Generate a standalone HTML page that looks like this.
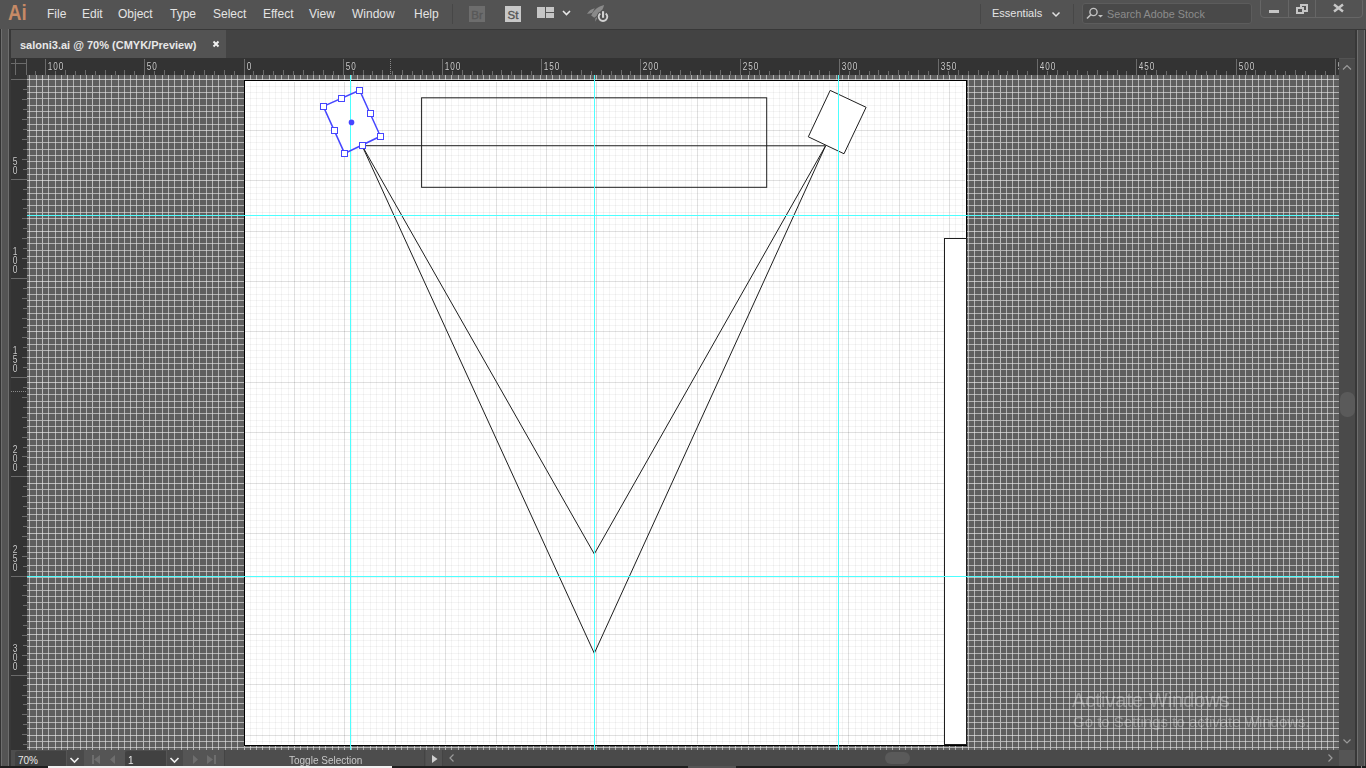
<!DOCTYPE html>
<html><head><meta charset="utf-8">
<style>
*{margin:0;padding:0;box-sizing:border-box}
html,body{width:1366px;height:768px;overflow:hidden;background:#535353;font-family:"Liberation Sans",sans-serif}
.a{position:absolute}
.m{position:absolute;top:6px;font-size:12px;color:#e4e4e4;line-height:16px;white-space:nowrap}
svg text.rl{font-family:"Liberation Sans",sans-serif;font-size:10px;fill:#cccccc;letter-spacing:1.2px;stroke:#262626;stroke-width:0.7px;paint-order:stroke;stroke-linejoin:round}
</style></head><body>
<!-- menu bar -->
<div class="a" style="left:0;top:0;width:1366px;height:29px;background:#535353"></div>
<div class="a" style="left:0;top:29px;width:1366px;height:1px;background:#383838"></div>
<div class="a" style="left:8px;top:0px;font-size:22px;font-weight:bold;color:#c68a66;line-height:26px;transform:scaleX(0.85);transform-origin:0 0">Ai</div>
<div class="m" style="left:47px">File</div>
<div class="m" style="left:82px">Edit</div>
<div class="m" style="left:118px">Object</div>
<div class="m" style="left:170px">Type</div>
<div class="m" style="left:213px">Select</div>
<div class="m" style="left:263px">Effect</div>
<div class="m" style="left:309px">View</div>
<div class="m" style="left:352px">Window</div>
<div class="m" style="left:414px">Help</div>
<div class="a" style="left:452px;top:4px;width:1px;height:20px;background:#474747"></div>
<div class="a" style="left:469px;top:6px;width:16px;height:16px;background:#6d6d6d;color:#585858;font-size:11.5px;line-height:18px;text-align:center;-webkit-text-stroke:0.35px #585858">Br</div>
<div class="a" style="left:505px;top:6px;width:16px;height:16px;background:#c8c8c8;color:#555;font-size:11.5px;line-height:18px;text-align:center;-webkit-text-stroke:0.35px #555">St</div>
<div class="a" style="left:537px;top:7px;width:8px;height:11px;background:#c6c6c6"></div>
<div class="a" style="left:546px;top:7px;width:8px;height:5px;background:#c6c6c6"></div>
<div class="a" style="left:546px;top:13px;width:8px;height:5px;background:#c6c6c6"></div>
<svg class="a" style="left:0;top:0" width="1366" height="30">
 <path d="M563 11l3.5 3.5l3.5-3.5" fill="none" stroke="#e8e8e8" stroke-width="1.6"/>
 <path d="M1052.5 12.5l3.5 3.5l3.5-3.5" fill="none" stroke="#e0e0e0" stroke-width="1.5"/>
 <path d="M587 13.7C589 10.6 591.6 8.8 594.8 8.2L592.3 12.8C590.6 13.5 588.8 13.8 587 13.7Z" fill="#8a8a8a"/>
 <path d="M591.2 15.6C593.5 10.2 598 6.6 604 5.1C603.2 9.6 600.2 14 594.2 17.7Z" fill="#8a8a8a"/>
 <path d="M595 21.8L595.6 17.9L598.3 16.4Z" fill="#8a8a8a"/>
 <circle cx="603" cy="17" r="6.2" fill="#535353"/>
 <path d="M600.3 13.4A4.3 4.3 0 1 0 605.7 13.4" fill="none" stroke="#d2d2d2" stroke-width="1.9"/>
 <rect x="601.3" y="10.2" width="3.4" height="8.6" fill="#535353"/>
 <rect x="602" y="11.2" width="2.1" height="6.6" fill="#d2d2d2"/>
</svg>
<div class="a" style="left:980px;top:4px;width:1px;height:20px;background:#474747"></div>
<div class="m" style="left:992px;top:5px;font-size:11px">Essentials</div>
<div class="a" style="left:1073px;top:4px;width:1px;height:20px;background:#474747"></div>
<div class="a" style="left:1082px;top:3px;width:170px;height:21px;background:#494949;border:1px solid #5c5c5c;border-radius:3px"></div>
<svg class="a" style="left:1083px;top:3px" width="30" height="21">
 <circle cx="10.5" cy="9" r="3.6" fill="none" stroke="#c2c2c2" stroke-width="1.4"/>
 <path d="M8 11.5L4 15.5" stroke="#c2c2c2" stroke-width="1.6"/>
 <path d="M15 12h5l-2.5 2.5z" fill="#c2c2c2"/>
</svg>
<div class="m" style="left:1107px;top:6px;font-size:10.8px;color:#8c8c8c">Search Adobe Stock</div>
<div class="a" style="left:1260px;top:-3px;width:103px;height:21px;border:1px solid #666;border-radius:4px"></div>
<div class="a" style="left:1288px;top:0;width:1px;height:17px;background:#666"></div>
<div class="a" style="left:1315px;top:0;width:1px;height:17px;background:#666"></div>
<div class="a" style="left:1269px;top:10px;width:10px;height:3px;background:#c6c6c6"></div>
<svg class="a" style="left:1290px;top:0" width="25" height="17">
 <rect x="11" y="5" width="6" height="6" fill="none" stroke="#c6c6c6" stroke-width="2"/>
 <rect x="6" y="7" width="8" height="7" fill="#535353"/>
 <rect x="7" y="8" width="6" height="5" fill="none" stroke="#c6c6c6" stroke-width="2"/>
</svg>
<svg class="a" style="left:1318px;top:0" width="40" height="17">
 <path d="M16 4.5l9 7M25 4.5l-9 7" stroke="#c6c6c6" stroke-width="2.4"/>
</svg>
<!-- tab bar -->
<div class="a" style="left:0;top:30px;width:1366px;height:28px;background:#434343"></div>
<div class="a" style="left:11px;top:30px;width:215px;height:28px;background:#535353"></div>
<div class="a" style="left:20px;top:38px;font-size:11px;font-weight:bold;color:#e8e8e8;line-height:14px;white-space:nowrap">saloni3.ai @ 70% (CMYK/Preview)</div>
<svg class="a" style="left:210px;top:38px" width="14" height="12">
 <path d="M3.5 3.5l5 5M8.5 3.5l-5 5" stroke="#f2f2f2" stroke-width="1.9"/>
</svg>
<!-- left strip -->
<div class="a" style="left:0;top:29px;width:11px;height:737px;background:#545454"></div>
<div class="a" style="left:0;top:29px;width:1px;height:737px;background:#333"></div>
<div class="a" style="left:1px;top:29px;width:1px;height:737px;background:#6e6e6e"></div>
<div class="a" style="left:8px;top:29px;width:1px;height:737px;background:#6e6e6e"></div>
<div class="a" style="left:9px;top:29px;width:2px;height:737px;background:#383838"></div>
<!-- right strip -->
<div class="a" style="left:1355px;top:30px;width:11px;height:736px;background:#505050"></div>
<div class="a" style="left:1355px;top:30px;width:2px;height:736px;background:#383838"></div>
<div class="a" style="left:1357px;top:30px;width:1px;height:736px;background:#6e6e6e"></div>
<div class="a" style="left:1364px;top:30px;width:1px;height:736px;background:#6e6e6e"></div>
<div class="a" style="left:1365px;top:30px;width:1px;height:736px;background:#333"></div>
<!-- vertical scrollbar -->
<div class="a" style="left:1339px;top:59px;width:16px;height:691px;background:#4a4a4a"></div>
<div class="a" style="left:1340px;top:392px;width:15px;height:25px;background:#5a5a5a;border-radius:7px"></div>
<svg class="a" style="left:1339px;top:58px" width="16" height="692">
 <path d="M4 11.5l4-4l4 4" fill="none" stroke="#9a9a9a" stroke-width="1.2"/>
 <path d="M4.5 681.5l3.5 3.5l3.5-3.5" fill="none" stroke="#9a9a9a" stroke-width="1.2"/>
</svg>
<!-- canvas svg -->
<svg class="a" style="left:0;top:0" width="1366" height="768" viewBox="0 0 1366 768">
<rect x="27" y="75" width="1312" height="675" fill="#5f5f5f"/>
<path fill="#b2b2b2" d="M29 75h1V750h-1zM36 75h1V750h-1zM48 75h1V750h-1zM55 75h1V750h-1zM61 75h1V750h-1zM67 75h1V750h-1zM73 75h1V750h-1zM80 75h1V750h-1zM86 75h1V750h-1zM99 75h1V750h-1zM105 75h1V750h-1zM111 75h1V750h-1zM118 75h1V750h-1zM124 75h1V750h-1zM130 75h1V750h-1zM136 75h1V750h-1zM149 75h1V750h-1zM155 75h1V750h-1zM162 75h1V750h-1zM168 75h1V750h-1zM174 75h1V750h-1zM181 75h1V750h-1zM187 75h1V750h-1zM199 75h1V750h-1zM206 75h1V750h-1zM212 75h1V750h-1zM218 75h1V750h-1zM225 75h1V750h-1zM231 75h1V750h-1zM237 75h1V750h-1zM250 75h1V750h-1zM256 75h1V750h-1zM262 75h1V750h-1zM269 75h1V750h-1zM275 75h1V750h-1zM281 75h1V750h-1zM288 75h1V750h-1zM300 75h1V750h-1zM307 75h1V750h-1zM313 75h1V750h-1zM319 75h1V750h-1zM325 75h1V750h-1zM332 75h1V750h-1zM338 75h1V750h-1zM351 75h1V750h-1zM357 75h1V750h-1zM363 75h1V750h-1zM370 75h1V750h-1zM376 75h1V750h-1zM382 75h1V750h-1zM388 75h1V750h-1zM401 75h1V750h-1zM407 75h1V750h-1zM414 75h1V750h-1zM420 75h1V750h-1zM426 75h1V750h-1zM433 75h1V750h-1zM439 75h1V750h-1zM451 75h1V750h-1zM458 75h1V750h-1zM464 75h1V750h-1zM470 75h1V750h-1zM477 75h1V750h-1zM483 75h1V750h-1zM489 75h1V750h-1zM502 75h1V750h-1zM508 75h1V750h-1zM514 75h1V750h-1zM521 75h1V750h-1zM527 75h1V750h-1zM533 75h1V750h-1zM540 75h1V750h-1zM552 75h1V750h-1zM559 75h1V750h-1zM565 75h1V750h-1zM571 75h1V750h-1zM577 75h1V750h-1zM584 75h1V750h-1zM590 75h1V750h-1zM603 75h1V750h-1zM609 75h1V750h-1zM615 75h1V750h-1zM622 75h1V750h-1zM628 75h1V750h-1zM634 75h1V750h-1zM640 75h1V750h-1zM653 75h1V750h-1zM659 75h1V750h-1zM666 75h1V750h-1zM672 75h1V750h-1zM678 75h1V750h-1zM685 75h1V750h-1zM691 75h1V750h-1zM703 75h1V750h-1zM710 75h1V750h-1zM716 75h1V750h-1zM722 75h1V750h-1zM729 75h1V750h-1zM735 75h1V750h-1zM741 75h1V750h-1zM754 75h1V750h-1zM760 75h1V750h-1zM766 75h1V750h-1zM773 75h1V750h-1zM779 75h1V750h-1zM785 75h1V750h-1zM792 75h1V750h-1zM804 75h1V750h-1zM811 75h1V750h-1zM817 75h1V750h-1zM823 75h1V750h-1zM829 75h1V750h-1zM836 75h1V750h-1zM842 75h1V750h-1zM855 75h1V750h-1zM861 75h1V750h-1zM867 75h1V750h-1zM874 75h1V750h-1zM880 75h1V750h-1zM886 75h1V750h-1zM892 75h1V750h-1zM905 75h1V750h-1zM911 75h1V750h-1zM918 75h1V750h-1zM924 75h1V750h-1zM930 75h1V750h-1zM937 75h1V750h-1zM943 75h1V750h-1zM955 75h1V750h-1zM962 75h1V750h-1zM968 75h1V750h-1zM974 75h1V750h-1zM981 75h1V750h-1zM987 75h1V750h-1zM993 75h1V750h-1zM1006 75h1V750h-1zM1012 75h1V750h-1zM1018 75h1V750h-1zM1025 75h1V750h-1zM1031 75h1V750h-1zM1037 75h1V750h-1zM1044 75h1V750h-1zM1056 75h1V750h-1zM1063 75h1V750h-1zM1069 75h1V750h-1zM1075 75h1V750h-1zM1081 75h1V750h-1zM1088 75h1V750h-1zM1094 75h1V750h-1zM1107 75h1V750h-1zM1113 75h1V750h-1zM1119 75h1V750h-1zM1126 75h1V750h-1zM1132 75h1V750h-1zM1138 75h1V750h-1zM1144 75h1V750h-1zM1157 75h1V750h-1zM1163 75h1V750h-1zM1170 75h1V750h-1zM1176 75h1V750h-1zM1182 75h1V750h-1zM1189 75h1V750h-1zM1195 75h1V750h-1zM1207 75h1V750h-1zM1214 75h1V750h-1zM1220 75h1V750h-1zM1226 75h1V750h-1zM1233 75h1V750h-1zM1239 75h1V750h-1zM1245 75h1V750h-1zM1258 75h1V750h-1zM1264 75h1V750h-1zM1270 75h1V750h-1zM1277 75h1V750h-1zM1283 75h1V750h-1zM1289 75h1V750h-1zM1296 75h1V750h-1zM1308 75h1V750h-1zM1315 75h1V750h-1zM1321 75h1V750h-1zM1327 75h1V750h-1zM1333 75h1V750h-1z"/>
<path fill="rgba(230,230,230,0.61)" d="M27 86H1339v1H27zM27 92H1339v1H27zM27 98H1339v1H27zM27 105H1339v1H27zM27 111H1339v1H27zM27 117H1339v1H27zM27 124H1339v1H27zM27 136H1339v1H27zM27 142H1339v1H27zM27 149H1339v1H27zM27 155H1339v1H27zM27 161H1339v1H27zM27 168H1339v1H27zM27 174H1339v1H27zM27 187H1339v1H27zM27 193H1339v1H27zM27 199H1339v1H27zM27 205H1339v1H27zM27 212H1339v1H27zM27 218H1339v1H27zM27 224H1339v1H27zM27 237H1339v1H27zM27 243H1339v1H27zM27 250H1339v1H27zM27 256H1339v1H27zM27 262H1339v1H27zM27 268H1339v1H27zM27 275H1339v1H27zM27 287H1339v1H27zM27 294H1339v1H27zM27 300H1339v1H27zM27 306H1339v1H27zM27 313H1339v1H27zM27 319H1339v1H27zM27 325H1339v1H27zM27 338H1339v1H27zM27 344H1339v1H27zM27 350H1339v1H27zM27 357H1339v1H27zM27 363H1339v1H27zM27 369H1339v1H27zM27 376H1339v1H27zM27 388H1339v1H27zM27 394H1339v1H27zM27 401H1339v1H27zM27 407H1339v1H27zM27 413H1339v1H27zM27 420H1339v1H27zM27 426H1339v1H27zM27 439H1339v1H27zM27 445H1339v1H27zM27 451H1339v1H27zM27 457H1339v1H27zM27 464H1339v1H27zM27 470H1339v1H27zM27 476H1339v1H27zM27 489H1339v1H27zM27 495H1339v1H27zM27 502H1339v1H27zM27 508H1339v1H27zM27 514H1339v1H27zM27 520H1339v1H27zM27 527H1339v1H27zM27 539H1339v1H27zM27 546H1339v1H27zM27 552H1339v1H27zM27 558H1339v1H27zM27 565H1339v1H27zM27 571H1339v1H27zM27 577H1339v1H27zM27 590H1339v1H27zM27 596H1339v1H27zM27 602H1339v1H27zM27 609H1339v1H27zM27 615H1339v1H27zM27 621H1339v1H27zM27 628H1339v1H27zM27 640H1339v1H27zM27 646H1339v1H27zM27 653H1339v1H27zM27 659H1339v1H27zM27 665H1339v1H27zM27 672H1339v1H27zM27 678H1339v1H27zM27 691H1339v1H27zM27 697H1339v1H27zM27 703H1339v1H27zM27 709H1339v1H27zM27 716H1339v1H27zM27 722H1339v1H27zM27 728H1339v1H27zM27 741H1339v1H27zM27 747H1339v1H27z"/>
<path fill="#bcbcbc" d="M42 75h1V750h-1zM92 75h1V750h-1zM143 75h1V750h-1zM193 75h1V750h-1zM244 75h1V750h-1zM294 75h1V750h-1zM344 75h1V750h-1zM395 75h1V750h-1zM445 75h1V750h-1zM496 75h1V750h-1zM546 75h1V750h-1zM596 75h1V750h-1zM647 75h1V750h-1zM697 75h1V750h-1zM748 75h1V750h-1zM798 75h1V750h-1zM848 75h1V750h-1zM899 75h1V750h-1zM949 75h1V750h-1zM1000 75h1V750h-1zM1050 75h1V750h-1zM1100 75h1V750h-1zM1151 75h1V750h-1zM1201 75h1V750h-1zM1252 75h1V750h-1zM1302 75h1V750h-1z"/>
<path fill="rgba(235,235,235,0.66)" d="M27 79H1339v1H27zM27 130H1339v1H27zM27 180H1339v1H27zM27 231H1339v1H27zM27 281H1339v1H27zM27 331H1339v1H27zM27 382H1339v1H27zM27 432H1339v1H27zM27 483H1339v1H27zM27 533H1339v1H27zM27 583H1339v1H27zM27 634H1339v1H27zM27 684H1339v1H27zM27 735H1339v1H27z"/>
<rect x="244" y="80" width="723" height="666" fill="#000"/>
<rect x="245" y="81" width="721" height="664" fill="#fff"/>
<path fill="rgba(0,0,0,0.045)" d="M250 82h1V744h-1zM256 82h1V744h-1zM262 82h1V744h-1zM269 82h1V744h-1zM275 82h1V744h-1zM281 82h1V744h-1zM288 82h1V744h-1zM300 82h1V744h-1zM307 82h1V744h-1zM313 82h1V744h-1zM319 82h1V744h-1zM325 82h1V744h-1zM332 82h1V744h-1zM338 82h1V744h-1zM351 82h1V744h-1zM357 82h1V744h-1zM363 82h1V744h-1zM370 82h1V744h-1zM376 82h1V744h-1zM382 82h1V744h-1zM388 82h1V744h-1zM401 82h1V744h-1zM407 82h1V744h-1zM414 82h1V744h-1zM420 82h1V744h-1zM426 82h1V744h-1zM433 82h1V744h-1zM439 82h1V744h-1zM451 82h1V744h-1zM458 82h1V744h-1zM464 82h1V744h-1zM470 82h1V744h-1zM477 82h1V744h-1zM483 82h1V744h-1zM489 82h1V744h-1zM502 82h1V744h-1zM508 82h1V744h-1zM514 82h1V744h-1zM521 82h1V744h-1zM527 82h1V744h-1zM533 82h1V744h-1zM540 82h1V744h-1zM552 82h1V744h-1zM559 82h1V744h-1zM565 82h1V744h-1zM571 82h1V744h-1zM577 82h1V744h-1zM584 82h1V744h-1zM590 82h1V744h-1zM603 82h1V744h-1zM609 82h1V744h-1zM615 82h1V744h-1zM622 82h1V744h-1zM628 82h1V744h-1zM634 82h1V744h-1zM640 82h1V744h-1zM653 82h1V744h-1zM659 82h1V744h-1zM666 82h1V744h-1zM672 82h1V744h-1zM678 82h1V744h-1zM685 82h1V744h-1zM691 82h1V744h-1zM703 82h1V744h-1zM710 82h1V744h-1zM716 82h1V744h-1zM722 82h1V744h-1zM729 82h1V744h-1zM735 82h1V744h-1zM741 82h1V744h-1zM754 82h1V744h-1zM760 82h1V744h-1zM766 82h1V744h-1zM773 82h1V744h-1zM779 82h1V744h-1zM785 82h1V744h-1zM792 82h1V744h-1zM804 82h1V744h-1zM811 82h1V744h-1zM817 82h1V744h-1zM823 82h1V744h-1zM829 82h1V744h-1zM836 82h1V744h-1zM842 82h1V744h-1zM855 82h1V744h-1zM861 82h1V744h-1zM867 82h1V744h-1zM874 82h1V744h-1zM880 82h1V744h-1zM886 82h1V744h-1zM892 82h1V744h-1zM905 82h1V744h-1zM911 82h1V744h-1zM918 82h1V744h-1zM924 82h1V744h-1zM930 82h1V744h-1zM937 82h1V744h-1zM943 82h1V744h-1zM955 82h1V744h-1zM962 82h1V744h-1z"/>
<path fill="rgba(0,0,0,0.045)" d="M245 86H965v1H245zM245 92H965v1H245zM245 98H965v1H245zM245 105H965v1H245zM245 111H965v1H245zM245 117H965v1H245zM245 124H965v1H245zM245 136H965v1H245zM245 142H965v1H245zM245 149H965v1H245zM245 155H965v1H245zM245 161H965v1H245zM245 168H965v1H245zM245 174H965v1H245zM245 187H965v1H245zM245 193H965v1H245zM245 199H965v1H245zM245 205H965v1H245zM245 212H965v1H245zM245 218H965v1H245zM245 224H965v1H245zM245 237H965v1H245zM245 243H965v1H245zM245 250H965v1H245zM245 256H965v1H245zM245 262H965v1H245zM245 268H965v1H245zM245 275H965v1H245zM245 287H965v1H245zM245 294H965v1H245zM245 300H965v1H245zM245 306H965v1H245zM245 313H965v1H245zM245 319H965v1H245zM245 325H965v1H245zM245 338H965v1H245zM245 344H965v1H245zM245 350H965v1H245zM245 357H965v1H245zM245 363H965v1H245zM245 369H965v1H245zM245 376H965v1H245zM245 388H965v1H245zM245 394H965v1H245zM245 401H965v1H245zM245 407H965v1H245zM245 413H965v1H245zM245 420H965v1H245zM245 426H965v1H245zM245 439H965v1H245zM245 445H965v1H245zM245 451H965v1H245zM245 457H965v1H245zM245 464H965v1H245zM245 470H965v1H245zM245 476H965v1H245zM245 489H965v1H245zM245 495H965v1H245zM245 502H965v1H245zM245 508H965v1H245zM245 514H965v1H245zM245 520H965v1H245zM245 527H965v1H245zM245 539H965v1H245zM245 546H965v1H245zM245 552H965v1H245zM245 558H965v1H245zM245 565H965v1H245zM245 571H965v1H245zM245 577H965v1H245zM245 590H965v1H245zM245 596H965v1H245zM245 602H965v1H245zM245 609H965v1H245zM245 615H965v1H245zM245 621H965v1H245zM245 628H965v1H245zM245 640H965v1H245zM245 646H965v1H245zM245 653H965v1H245zM245 659H965v1H245zM245 665H965v1H245zM245 672H965v1H245zM245 678H965v1H245zM245 691H965v1H245zM245 697H965v1H245zM245 703H965v1H245zM245 709H965v1H245zM245 716H965v1H245zM245 722H965v1H245zM245 728H965v1H245zM245 741H965v1H245z"/>
<path fill="rgba(0,0,0,0.12)" d="M294 82h1V744h-1zM344 82h1V744h-1zM395 82h1V744h-1zM445 82h1V744h-1zM496 82h1V744h-1zM546 82h1V744h-1zM596 82h1V744h-1zM647 82h1V744h-1zM697 82h1V744h-1zM748 82h1V744h-1zM798 82h1V744h-1zM848 82h1V744h-1zM899 82h1V744h-1zM949 82h1V744h-1z"/>
<path fill="rgba(0,0,0,0.12)" d="M245 130H965v1H245zM245 180H965v1H245zM245 231H965v1H245zM245 281H965v1H245zM245 331H965v1H245zM245 382H965v1H245zM245 432H965v1H245zM245 483H965v1H245zM245 533H965v1H245zM245 583H965v1H245zM245 634H965v1H245zM245 684H965v1H245zM245 735H965v1H245z"/>
<g fill="none" stroke="#1e1e1e" stroke-width="1">
<rect x="421.6" y="97.8" width="345.1" height="89.5"/>
<path d="M362.1 145.7L825.6 145.8"/>
<path d="M362.1 145.7L594.3 554.0L825.6 145.8"/>
<path d="M362.1 145.7L594.3 653.3L825.6 145.8"/>
</g>
<path fill="#fff" stroke="#1e1e1e" stroke-width="1" d="M830.2 90.4L866.1 107.3L844 153.75L808.3 136.8Z"/>
<rect x="944.5" y="238.5" width="22" height="506" fill="#fff" stroke="#1e1e1e" stroke-width="1"/>
<g fill="#4cffff">
<rect x="350" y="75" width="1" height="675"/>
<rect x="594" y="75" width="1" height="675"/>
<rect x="838" y="75" width="1" height="675"/>
<rect x="27" y="215" width="1312" height="1"/>
<rect x="27" y="576" width="1312" height="1"/>
</g>
<path fill="#fff" stroke="none" d="M323.3 106.4L359.6 90.3L380.4 136.3L344.6 153.4Z"/>
<rect x="350" y="85" width="1" height="75" fill="#4cffff"/>
<path fill="none" stroke="#4646ff" stroke-width="1.5" d="M323.3 106.4L359.6 90.3L380.4 136.3L344.6 153.4Z"/>
<rect x="320.5" y="103.5" width="6" height="6" fill="#fff" stroke="#4646ff" stroke-width="1" shape-rendering="crispEdges"/>
<rect x="338.5" y="95.5" width="6" height="6" fill="#fff" stroke="#4646ff" stroke-width="1" shape-rendering="crispEdges"/>
<rect x="356.5" y="87.5" width="6" height="6" fill="#fff" stroke="#4646ff" stroke-width="1" shape-rendering="crispEdges"/>
<rect x="367.5" y="110.5" width="6" height="6" fill="#fff" stroke="#4646ff" stroke-width="1" shape-rendering="crispEdges"/>
<rect x="377.5" y="133.5" width="6" height="6" fill="#fff" stroke="#4646ff" stroke-width="1" shape-rendering="crispEdges"/>
<rect x="359.5" y="142.5" width="6" height="6" fill="#fff" stroke="#4646ff" stroke-width="1" shape-rendering="crispEdges"/>
<rect x="341.5" y="150.5" width="6" height="6" fill="#fff" stroke="#4646ff" stroke-width="1" shape-rendering="crispEdges"/>
<rect x="331.5" y="127.5" width="6" height="6" fill="#fff" stroke="#4646ff" stroke-width="1" shape-rendering="crispEdges"/>
<circle cx="351.5" cy="122.4" r="2.8" fill="#4646ff"/>
<rect x="11" y="58" width="1328" height="17" fill="#333333"/>
<rect x="11" y="58" width="16" height="692" fill="#333333"/>
<path fill="#6b6b6b" d="M35 71h1v4h-1zM45 59h1v16h-1zM55 71h1v4h-1zM65 70h1v5h-1zM75 71h1v4h-1zM85 70h1v5h-1zM95 71h1v4h-1zM105 70h1v5h-1zM115 71h1v4h-1zM124 70h1v5h-1zM134 71h1v4h-1zM144 59h1v16h-1zM154 71h1v4h-1zM164 70h1v5h-1zM174 71h1v4h-1zM184 70h1v5h-1zM194 71h1v4h-1zM204 70h1v5h-1zM214 71h1v4h-1zM224 70h1v5h-1zM234 71h1v4h-1zM244 59h1v16h-1zM253 71h1v4h-1zM263 70h1v5h-1zM273 71h1v4h-1zM283 70h1v5h-1zM293 71h1v4h-1zM303 70h1v5h-1zM313 71h1v4h-1zM323 70h1v5h-1zM333 71h1v4h-1zM343 59h1v16h-1zM353 71h1v4h-1zM363 70h1v5h-1zM372 71h1v4h-1zM382 70h1v5h-1zM392 71h1v4h-1zM402 70h1v5h-1zM412 71h1v4h-1zM422 70h1v5h-1zM432 71h1v4h-1zM442 59h1v16h-1zM452 71h1v4h-1zM462 70h1v5h-1zM472 71h1v4h-1zM482 70h1v5h-1zM492 71h1v4h-1zM501 70h1v5h-1zM511 71h1v4h-1zM521 70h1v5h-1zM531 71h1v4h-1zM541 59h1v16h-1zM551 71h1v4h-1zM561 70h1v5h-1zM571 71h1v4h-1zM581 70h1v5h-1zM591 71h1v4h-1zM601 70h1v5h-1zM611 71h1v4h-1zM621 70h1v5h-1zM630 71h1v4h-1zM640 59h1v16h-1zM650 71h1v4h-1zM660 70h1v5h-1zM670 71h1v4h-1zM680 70h1v5h-1zM690 71h1v4h-1zM700 70h1v5h-1zM710 71h1v4h-1zM720 70h1v5h-1zM730 71h1v4h-1zM740 59h1v16h-1zM749 71h1v4h-1zM759 70h1v5h-1zM769 71h1v4h-1zM779 70h1v5h-1zM789 71h1v4h-1zM799 70h1v5h-1zM809 71h1v4h-1zM819 70h1v5h-1zM829 71h1v4h-1zM839 59h1v16h-1zM849 71h1v4h-1zM859 70h1v5h-1zM869 71h1v4h-1zM878 70h1v5h-1zM888 71h1v4h-1zM898 70h1v5h-1zM908 71h1v4h-1zM918 70h1v5h-1zM928 71h1v4h-1zM938 59h1v16h-1zM948 71h1v4h-1zM958 70h1v5h-1zM968 71h1v4h-1zM978 70h1v5h-1zM988 71h1v4h-1zM998 70h1v5h-1zM1007 71h1v4h-1zM1017 70h1v5h-1zM1027 71h1v4h-1zM1037 59h1v16h-1zM1047 71h1v4h-1zM1057 70h1v5h-1zM1067 71h1v4h-1zM1077 70h1v5h-1zM1087 71h1v4h-1zM1097 70h1v5h-1zM1107 71h1v4h-1zM1117 70h1v5h-1zM1126 71h1v4h-1zM1136 59h1v16h-1zM1146 71h1v4h-1zM1156 70h1v5h-1zM1166 71h1v4h-1zM1176 70h1v5h-1zM1186 71h1v4h-1zM1196 70h1v5h-1zM1206 71h1v4h-1zM1216 70h1v5h-1zM1226 71h1v4h-1zM1236 59h1v16h-1zM1246 71h1v4h-1zM1255 70h1v5h-1zM1265 71h1v4h-1zM1275 70h1v5h-1zM1285 71h1v4h-1zM1295 70h1v5h-1zM1305 71h1v4h-1zM1315 70h1v5h-1zM1325 71h1v4h-1zM1335 59h1v16h-1zM11 79h16v1h-16zM23 89h4v1h-4zM22 99h5v1h-5zM23 109h4v1h-4zM22 119h5v1h-5zM23 129h4v1h-4zM22 139h5v1h-5zM23 149h4v1h-4zM22 159h5v1h-5zM23 169h4v1h-4zM11 179h16v1h-16zM23 189h4v1h-4zM22 199h5v1h-5zM23 208h4v1h-4zM22 218h5v1h-5zM23 228h4v1h-4zM22 238h5v1h-5zM23 248h4v1h-4zM22 258h5v1h-5zM23 268h4v1h-4zM11 278h16v1h-16zM23 288h4v1h-4zM22 298h5v1h-5zM23 308h4v1h-4zM22 318h5v1h-5zM23 327h4v1h-4zM22 337h5v1h-5zM23 347h4v1h-4zM22 357h5v1h-5zM23 367h4v1h-4zM11 377h16v1h-16zM23 387h4v1h-4zM22 397h5v1h-5zM23 407h4v1h-4zM22 417h5v1h-5zM23 427h4v1h-4zM22 437h5v1h-5zM23 447h4v1h-4zM22 456h5v1h-5zM23 466h4v1h-4zM11 476h16v1h-16zM23 486h4v1h-4zM22 496h5v1h-5zM23 506h4v1h-4zM22 516h5v1h-5zM23 526h4v1h-4zM22 536h5v1h-5zM23 546h4v1h-4zM22 556h5v1h-5zM23 566h4v1h-4zM11 576h16v1h-16zM23 585h4v1h-4zM22 595h5v1h-5zM23 605h4v1h-4zM22 615h5v1h-5zM23 625h4v1h-4zM22 635h5v1h-5zM23 645h4v1h-4zM22 655h5v1h-5zM23 665h4v1h-4zM11 675h16v1h-16zM23 685h4v1h-4zM22 695h5v1h-5zM23 704h4v1h-4zM22 714h5v1h-5zM23 724h4v1h-4zM22 734h5v1h-5zM23 744h4v1h-4zM11 63h16v1h-16z M15 59h1v16h-1z M26 59h1v16h-1z"/>
<path stroke="#8a8a8a" stroke-width="1" stroke-dasharray="1 1" d="M390.5 59V75M11 391.5H27"/>
</svg>
<svg class="a" style="left:0;top:0;will-change:transform" width="1366" height="768" viewBox="0 0 1366 768">
<clipPath id="rc"><rect x="27" y="58" width="1312" height="17"/></clipPath>
<g clip-path="url(#rc)">
<text transform="translate(47.7 70) scale(0.82 1)" class="rl">100</text>
<text transform="translate(146.7 70) scale(0.82 1)" class="rl">50</text>
<text transform="translate(246.7 70) scale(0.82 1)" class="rl">0</text>
<text transform="translate(345.7 70) scale(0.82 1)" class="rl">50</text>
<text transform="translate(444.7 70) scale(0.82 1)" class="rl">100</text>
<text transform="translate(543.7 70) scale(0.82 1)" class="rl">150</text>
<text transform="translate(642.7 70) scale(0.82 1)" class="rl">200</text>
<text transform="translate(742.7 70) scale(0.82 1)" class="rl">250</text>
<text transform="translate(841.7 70) scale(0.82 1)" class="rl">300</text>
<text transform="translate(940.7 70) scale(0.82 1)" class="rl">350</text>
<text transform="translate(1039.7 70) scale(0.82 1)" class="rl">400</text>
<text transform="translate(1138.7 70) scale(0.82 1)" class="rl">450</text>
<text transform="translate(1238.7 70) scale(0.82 1)" class="rl">500</text>
<text transform="translate(1337.7 70) scale(0.82 1)" class="rl">550</text>
</g>
<text transform="translate(12.8 165) scale(0.85 1)" class="rl">5</text>
<text transform="translate(12.8 174) scale(0.85 1)" class="rl">0</text>
<text transform="translate(12.8 255) scale(0.85 1)" class="rl">1</text>
<text transform="translate(12.8 264) scale(0.85 1)" class="rl">0</text>
<text transform="translate(12.8 273) scale(0.85 1)" class="rl">0</text>
<text transform="translate(12.8 354) scale(0.85 1)" class="rl">1</text>
<text transform="translate(12.8 363) scale(0.85 1)" class="rl">5</text>
<text transform="translate(12.8 372) scale(0.85 1)" class="rl">0</text>
<text transform="translate(12.8 453) scale(0.85 1)" class="rl">2</text>
<text transform="translate(12.8 462) scale(0.85 1)" class="rl">0</text>
<text transform="translate(12.8 471) scale(0.85 1)" class="rl">0</text>
<text transform="translate(12.8 553) scale(0.85 1)" class="rl">2</text>
<text transform="translate(12.8 562) scale(0.85 1)" class="rl">5</text>
<text transform="translate(12.8 571) scale(0.85 1)" class="rl">0</text>
<text transform="translate(12.8 652) scale(0.85 1)" class="rl">3</text>
<text transform="translate(12.8 661) scale(0.85 1)" class="rl">0</text>
<text transform="translate(12.8 670) scale(0.85 1)" class="rl">0</text>
</svg>
<!-- status bar -->
<div class="a" style="left:11px;top:750px;width:1344px;height:16px;background:#4d4d4d"></div>
<div class="a" style="left:15px;top:751px;width:51px;height:15px;background:#414141;border-radius:3px 0 0 0"></div>
<div class="a" style="left:66px;top:750px;width:17px;height:16px;background:#4a4a4a;border-left:1px solid #555"></div>
<div class="a" style="left:18px;top:754px;font-size:10px;color:#e8e8e8;line-height:14px">70%</div>
<svg class="a" style="left:66px;top:751px" width="17" height="16"><path d="M4.5 7l4 4l4-4" fill="none" stroke="#eee" stroke-width="1.6"/></svg>
<div class="a" style="left:83px;top:750px;width:42px;height:16px;background:#555;border-left:1px solid #4a4a4a"></div>
<svg class="a" style="left:83px;top:751.5px" width="42" height="16" fill="#6e6e6e">
 <rect x="9" y="3" width="2" height="9"/><path d="M17 3v9l-6-4.5z"/><path d="M32 3v9l-5-4.5z"/>
</svg>
<div class="a" style="left:125px;top:751px;width:41px;height:15px;background:#414141;border-radius:3px 0 0 0"></div>
<div class="a" style="left:128px;top:754px;font-size:10px;color:#e8e8e8;line-height:14px">1</div>
<div class="a" style="left:166px;top:750px;width:17px;height:16px;background:#4a4a4a;border-left:1px solid #555"></div>
<svg class="a" style="left:166px;top:751px" width="17" height="16"><path d="M4.5 7l4 4l4-4" fill="none" stroke="#eee" stroke-width="1.6"/></svg>
<div class="a" style="left:183px;top:750px;width:42px;height:16px;background:#555"></div>
<svg class="a" style="left:183px;top:751.5px" width="42" height="16" fill="#6e6e6e">
 <path d="M10 3v9l5-4.5z"/><path d="M24 3v9l6-4.5z"/><rect x="31" y="3" width="2" height="9"/>
</svg>
<div class="a" style="left:224px;top:750px;width:1px;height:16px;background:#444"></div>
<div class="a" style="left:289px;top:754px;font-size:10px;color:#c8c8c8;line-height:14px;white-space:nowrap">Toggle Selection</div>
<div class="a" style="left:424px;top:750px;width:1px;height:16px;background:#444"></div>
<div class="a" style="left:426px;top:750px;width:17px;height:16px;background:#535353"></div>
<svg class="a" style="left:426px;top:751px" width="18" height="16"><path d="M6 4v8l5.5-4z" fill="#d0d0d0"/></svg>
<div class="a" style="left:442px;top:750px;width:1px;height:16px;background:#444"></div>
<div class="a" style="left:443px;top:750px;width:896px;height:16px;background:#4a4a4a"></div>
<svg class="a" style="left:443px;top:750px" width="896" height="16">
 <path d="M10.5 4.5l-3.5 3.5l3.5 3.5" fill="none" stroke="#9a9a9a" stroke-width="1.2"/>
 <path d="M885.5 4.5l3.5 3.5l-3.5 3.5" fill="none" stroke="#9a9a9a" stroke-width="1.2"/>
</svg>
<div class="a" style="left:885px;top:752px;width:25px;height:12px;background:#5a5a5a;border-radius:6px"></div>
<div class="a" style="left:1339px;top:750px;width:16px;height:16px;background:#555"></div>
<!-- bottom strip -->
<div class="a" style="left:0;top:766px;width:1366px;height:2px;background:#1e1e1e"></div>
<div class="a" style="left:48px;top:766px;width:344px;height:2px;background:#f0f0f0"></div>
<div class="a" style="left:688px;top:766px;width:48px;height:2px;background:#555"></div>
<div class="a" style="left:1361px;top:766px;width:1px;height:2px;background:#8a8a8a"></div>
<!-- watermark -->
<div class="a" style="left:1072px;top:688px;font-size:20px;color:rgba(255,255,255,0.3);line-height:24px;white-space:nowrap">Activate Windows</div>
<div class="a" style="left:1073px;top:713px;font-size:15px;color:rgba(255,255,255,0.3);line-height:18px;white-space:nowrap">Go to Settings to activate Windows.</div>
</body></html>
